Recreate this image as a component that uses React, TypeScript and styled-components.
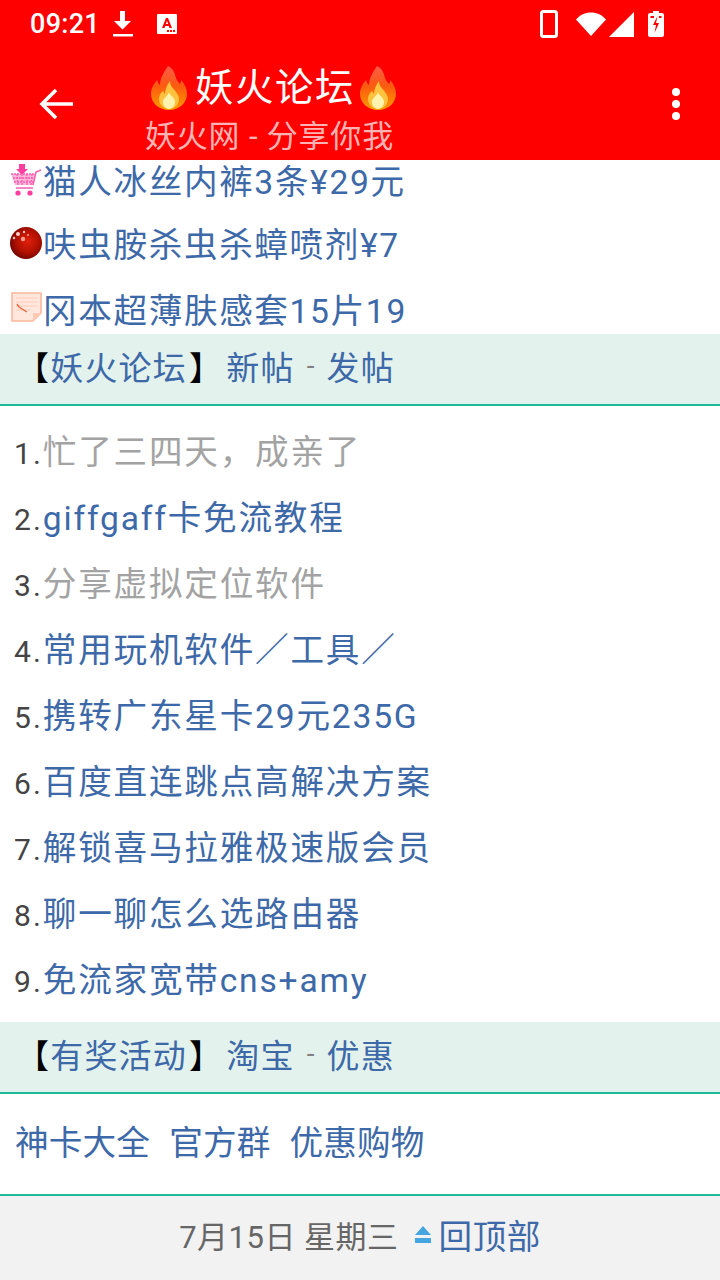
import React from "react";
import styled, { createGlobalStyle } from "styled-components";

const FONT = `Roboto, "Noto Sans CJK SC", sans-serif`;

const GlobalStyle = createGlobalStyle`
  html, body {
    margin: 0;
    padding: 0;
    background: #ffffff;
  }
  body {
    font-family: ${FONT};
  }
`;

const Page = styled.div`
  width: 720px;
  height: 1280px;
  display: flex;
  flex-direction: column;
  overflow: hidden;
`;

const StatusBar = styled.div`
  height: 48px;
  background: #ff0000;
  display: flex;
  align-items: center;
  padding: 0 56px 0 30px;
  color: #ffffff;
`;

const Clock = styled.span`
  font-size: 27px;
  font-weight: 500;
  letter-spacing: 0.3px;
  margin-right: 12px;
`;

const StatusSpacer = styled.div`
  flex: 1;
`;

const StatusIcon = styled.svg<{ $gap?: number }>`
  display: block;
  margin-left: ${(props) => props.$gap ?? 0}px;
`;

const Toolbar = styled.div`
  height: 112px;
  background: #ff0000;
  display: flex;
  align-items: center;
  padding: 0 40px 0 37px;
`;

const BackButton = styled.svg`
  display: block;
  margin-right: 68px;
`;

const TitleBlock = styled.div`
  flex: 1;
  display: flex;
  flex-direction: column;
  align-items: flex-start;
  padding-top: 9px;
`;

const Title = styled.div`
  display: flex;
  align-items: center;
  height: 56px;
  margin-left: 4px;
  color: #ffffff;
  font-size: 38.4px;
  letter-spacing: 1.6px;
  line-height: 56px;
`;

const Subtitle = styled.div`
  color: #ffb3b3;
  font-size: 31px;
  letter-spacing: 0.8px;
  line-height: 42px;
`;

const Flame = styled.svg<{ $left?: number; $right?: number }>`
  display: block;
  margin-left: ${(props) => props.$left ?? 0}px;
  margin-right: ${(props) => props.$right ?? 0}px;
`;

const MenuDots = styled.svg`
  display: block;
`;

const Promo = styled.div`
  height: 174px;
  flex: none;
`;

const PromoRow = styled.a<{ $height: number; $line: number }>`
  display: flex;
  align-items: flex-start;
  height: ${(props) => props.$height}px;
  line-height: ${(props) => props.$line}px;
  padding-left: 10px;
  color: #3d69a8;
  font-size: 33.6px;
  letter-spacing: 1.65px;
  white-space: nowrap;
`;

const PromoIcon = styled.svg<{ $top: number }>`
  display: block;
  flex: none;
  margin-top: ${(props) => props.$top}px;
`;

const SectionBar = styled.div`
  flex: none;
  box-sizing: content-box;
  background: #e3f2ed;
  border-bottom: 2px solid #1cb99a;
  display: flex;
  align-items: center;
  padding: 0 0 7px 16px;
  height: 63px;
  font-size: 33px;
  letter-spacing: 1.2px;
  white-space: pre;
`;

const Bracket = styled.span<{ $close?: boolean }>`
  color: #000000;
  margin-left: ${(props) => (props.$close ? 2 : 0)}px;
  margin-right: ${(props) => (props.$close ? 3 : 0)}px;
`;

const BlueLink = styled.a`
  color: #3d69a8;
`;

const Dash = styled.span`
  color: #808080;
  margin: 0 11px 0 12px;
  font-size: 28px;
`;

const PostList = styled.ol`
  list-style: none;
  margin: 0;
  padding: 14px 0 8px 14px;
`;

const PostRow = styled.li`
  height: 66px;
  line-height: 66px;
  font-size: 33.6px;
  letter-spacing: 1.8px;
  color: #444444;
  white-space: nowrap;
`;

const PostNumber = styled.span`
  font-size: 30px;
  letter-spacing: 2px;
`;

const PostTitle = styled.a<{ $read?: boolean }>`
  color: ${(props) => (props.$read ? "#a3a3a3" : "#3d69a8")};
`;

const LinkRow = styled.div`
  height: 102px;
  flex: none;
  box-sizing: border-box;
  border-bottom: 2px solid #1cb99a;
  display: flex;
  align-items: center;
  gap: 19px;
  padding: 0 0 8px 15px;
  color: #3d69a8;
  font-size: 33.6px;
  letter-spacing: 0.2px;
`;

const Footer = styled.div`
  flex: 1;
  background: #f2f2f2;
  display: flex;
  align-items: center;
  justify-content: center;
  padding-bottom: 8px;
  color: #666666;
  font-size: 31px;
  letter-spacing: 0.5px;
  white-space: pre;
`;

const TopIcon = styled.svg`
  display: block;
  margin: 2px 7px 0 15px;
`;

const TopLink = styled.a`
  color: #3d69a8;
  font-size: 33.6px;
`;

const FlameIcon = ({ id, left, right }: { id: string; left?: number; right?: number }) => (
  <Flame $left={left} $right={right} width="40" height="44" viewBox="0 0 40 44">
    <defs>
      <linearGradient id={id} x1="0" y1="0" x2="0" y2="1">
        <stop offset="0" stopColor="#ff5a4a" />
        <stop offset="0.45" stopColor="#fb5a10" />
        <stop offset="1" stopColor="#ff9a00" />
      </linearGradient>
    </defs>
    <path
      d="M19 0c6 3 7 8 8 12 1 3 3 5 4 6 1-1 1-3 1-4 4 4 6 9 6 14 0 9-8 16-18 16S2 37 2 28c0-6 3-10 6-14 1 2 1 4 3 5 0-7 4-13 8-19z"
      fill={`url(#${id})`}
    />
    <path
      d="M21 15c0 5 3 7 6 11 2 3 3 5 3 7 0 6-5 10-10 10S10 39 10 33c0-4 2-6 4-8 1 1 1 2 2 3 0-5 2-9 5-13z"
      fill="#ffc23f"
    />
    <path
      d="M20 26c0 3 6 5 6 10 0 4-3 7-6 7s-6-3-6-7c0-4 5-6 6-10z"
      fill="#fff3ae"
    />
  </Flame>
);

const CartIcon = () => (
  <PromoIcon $top={4} width="33" height="33" viewBox="0 0 33 33">
    <path d="M9 0h6v5h3l-6 6-6-6h3z" fill="#ff3fa0" />
    <path d="M1 10h24l-2 11H5z" fill="#ffb5d8" />
    <path
      d="M1 10h24M3 14h21M4 18h19M7 10l1 11M12 10v11M17 10v11M22 10l-1 11"
      stroke="#ff5cb0"
      strokeWidth="1.3"
      fill="none"
      strokeDasharray="2 1"
    />
    <path d="M23 21l3-13 5-2" stroke="#ff5cb0" strokeWidth="1.5" fill="none" />
    <path d="M6 24h17" stroke="#ff5cb0" strokeWidth="1.5" />
    <circle cx="8" cy="29" r="2.6" fill="#ff3fa0" />
    <circle cx="20" cy="29" r="2.6" fill="#ff3fa0" />
  </PromoIcon>
);

const BallIcon = () => (
  <PromoIcon $top={15} width="33" height="32" viewBox="0 0 33 32">
    <defs>
      <radialGradient id="ball" cx="0.55" cy="0.45" r="0.6">
        <stop offset="0" stopColor="#e0200c" />
        <stop offset="0.6" stopColor="#b01000" />
        <stop offset="1" stopColor="#680400" />
      </radialGradient>
    </defs>
    <circle cx="16" cy="16" r="16" fill="url(#ball)" />
    <circle cx="13" cy="12" r="2.2" fill="#ff9c8c" />
    <circle cx="8" cy="7" r="2" fill="#ffd0c8" />
    <circle cx="4" cy="11" r="1.3" fill="#ffc0b8" />
    <circle cx="14" cy="5" r="1.2" fill="#ffc0b8" />
    <circle cx="18" cy="8" r="1" fill="#ff9c8c" />
  </PromoIcon>
);

const NoteIcon = () => (
  <PromoIcon $top={14} width="33" height="30" viewBox="0 0 33 30">
    <path d="M2 1h29v20l-8 8H2z" fill="#ffe7dd" stroke="#ffb89c" strokeWidth="1.6" />
    <path d="M31 21h-8v8z" fill="#ffc9b2" />
    <path d="M6 6h21M6 10h21M6 14h21M6 18h14" stroke="#ffcdb9" strokeWidth="1.2" />
    <path d="M7 12l2 3 8 5" stroke="#ef6a3c" strokeWidth="1.4" fill="none" />
  </PromoIcon>
);

const posts: { title: string; read?: boolean }[] = [
  { title: "忙了三四天，成亲了", read: true },
  { title: "giffgaff卡免流教程" },
  { title: "分享虚拟定位软件", read: true },
  { title: "常用玩机软件／工具／" },
  { title: "携转广东星卡29元235G" },
  { title: "百度直连跳点高解决方案" },
  { title: "解锁喜马拉雅极速版会员" },
  { title: "聊一聊怎么选路由器" },
  { title: "免流家宽带cns+amy" },
];

const App = () => {
  return (
    <Page>
      <GlobalStyle />
      <StatusBar>
        <Clock>09:21</Clock>
        <StatusIcon width="22" height="28" viewBox="0 0 22 28" fill="#ffffff">
          <path d="M8 1h5v10h6l-8.500 8.500L2 11h6zM1 24h20v2.400H1z" />
        </StatusIcon>
        <StatusIcon $gap={23} width="20" height="20" viewBox="0 0 20 20">
          <path d="M1 0h18a1 1 0 0 1 1 1v18a1 1 0 0 1-1 1H1a1 1 0 0 1-1-1V1a1 1 0 0 1 1-1z" fill="#ffffff" />
          <path d="M5 14L9 4h2l4 10h-2.500l-.7-2H8.200l-.7 2zM8.900 10h2.200L10 6.800z" fill="#ff0000" />
          <path d="M10 16h2v2h-2zM13 16h2v2h-2zM16 16h2v2h-2z" fill="#ff0000" />
        </StatusIcon>
        <StatusSpacer />
        <StatusIcon width="18" height="28" viewBox="0 0 18 28">
          <rect x="1.500" y="1.500" width="15" height="25" rx="2" fill="none" stroke="#ffffff" strokeWidth="3" />
        </StatusIcon>
        <StatusIcon $gap={18} width="30" height="24" viewBox="0 0 30 24" fill="#ffffff">
          <path d="M0 7.500C4 3 9 .5 15 .5s11 2.500 15 7L15 24z" />
        </StatusIcon>
        <StatusIcon $gap={3} width="25" height="25" viewBox="0 0 25 25" fill="#ffffff">
          <path d="M25 0v25H0z" />
        </StatusIcon>
        <StatusIcon $gap={14} width="16" height="26" viewBox="0 0 16 26">
          <path d="M5 0h6v2h3a2 2 0 0 1 2 2v20a2 2 0 0 1-2 2H2a2 2 0 0 1-2-2V4a2 2 0 0 1 2-2h3z" fill="#ffffff" />
          <path d="M9.500 5L5 14h3l-1.500 8L11 12H8z" fill="#ff0000" />
          <path d="M2.500 5h3.500v2H2.500zM11 5h2.500v2H11z" fill="#ff0000" />
        </StatusIcon>
      </StatusBar>
      <Toolbar>
        <BackButton width="40" height="40" viewBox="0 0 40 40" fill="none">
          <path d="M36 20H5M19 6L5 20l14 14" stroke="#ffffff" strokeWidth="3.600" />
        </BackButton>
        <TitleBlock>
          <Title>
            <FlameIcon id="flameLeft" right={6} />
            妖火论坛
            <FlameIcon id="flameRight" left={3} />
          </Title>
          <Subtitle>妖火网 - 分享你我</Subtitle>
        </TitleBlock>
        <MenuDots width="8" height="32" viewBox="0 0 8 32" fill="#ffffff">
          <circle cx="4" cy="4" r="4" />
          <circle cx="4" cy="16" r="4" />
          <circle cx="4" cy="28" r="4" />
        </MenuDots>
      </Toolbar>
      <Promo>
        <PromoRow $height={52} $line={46}>
          <CartIcon />
          猫人冰丝内裤3条¥29元
        </PromoRow>
        <PromoRow $height={66} $line={68}>
          <BallIcon />
          呋虫胺杀虫杀蟑喷剂¥7
        </PromoRow>
        <PromoRow $height={56} $line={68}>
          <NoteIcon />
          冈本超薄肤感套15片19
        </PromoRow>
      </Promo>
      <SectionBar>
        <Bracket>【</Bracket>
        <BlueLink>妖火论坛</BlueLink>
        <Bracket $close>】</Bracket>
        <BlueLink>新帖</BlueLink>
        <Dash>-</Dash>
        <BlueLink>发帖</BlueLink>
      </SectionBar>
      <PostList>
        {posts.map((post, index) => (
          <PostRow key={post.title}>
            <PostNumber>{index + 1}.</PostNumber>
            <PostTitle $read={post.read}>{post.title}</PostTitle>
          </PostRow>
        ))}
      </PostList>
      <SectionBar>
        <Bracket>【</Bracket>
        <BlueLink>有奖活动</BlueLink>
        <Bracket $close>】</Bracket>
        <BlueLink>淘宝</BlueLink>
        <Dash>-</Dash>
        <BlueLink>优惠</BlueLink>
      </SectionBar>
      <LinkRow>
        <BlueLink>神卡大全</BlueLink>
        <BlueLink>官方群</BlueLink>
        <BlueLink>优惠购物</BlueLink>
      </LinkRow>
      <Footer>
        7月15日 星期三
        <TopIcon width="18" height="18" viewBox="0 0 18 18" fill="#45a5e0">
          <path d="M9 0l8 9H1zM1 12h16v5H1z" />
        </TopIcon>
        <TopLink>回顶部</TopLink>
      </Footer>
    </Page>
  );
};

export default App;
